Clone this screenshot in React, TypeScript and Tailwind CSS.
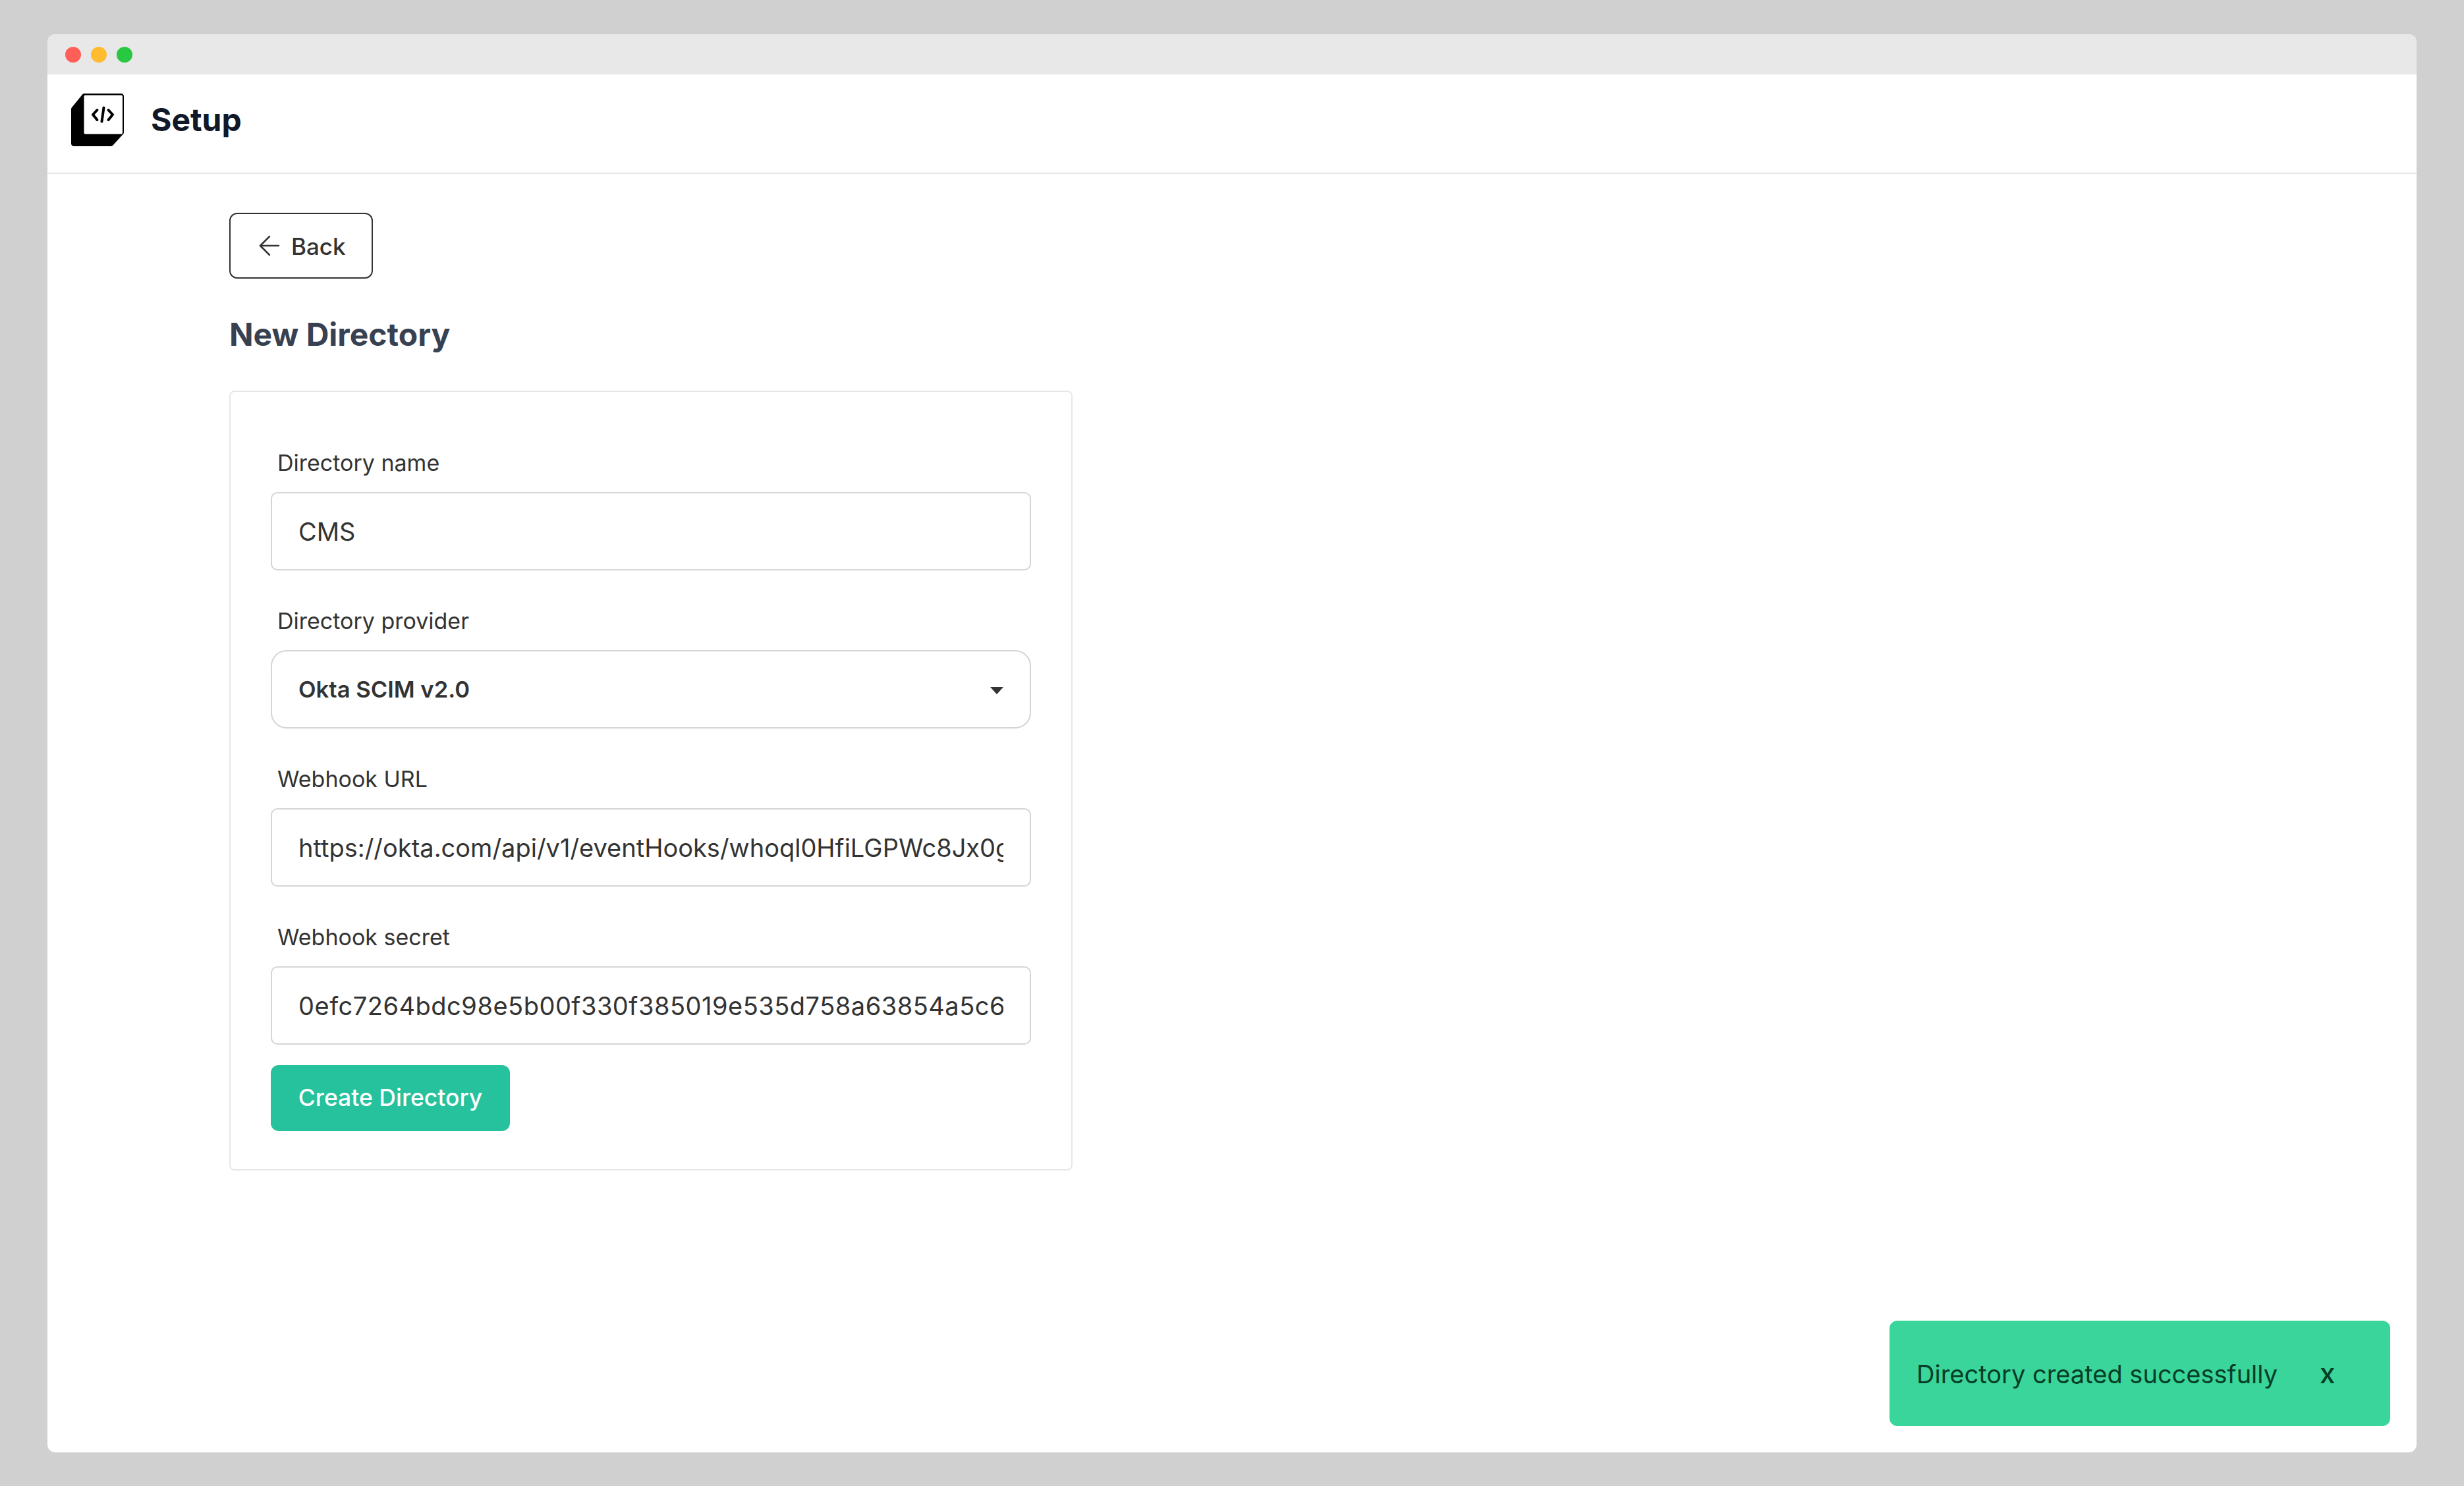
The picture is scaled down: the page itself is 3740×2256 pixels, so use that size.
import { ArrowLeft } from "lucide-react";

const inputClass =
  "h-[119px] w-full rounded-[10px] border-2 border-[#d5d5d5] bg-white px-[40px] text-[38px] text-[#333333] outline-none";

const labelClass = "flex h-[91px] items-center px-[10px] pt-[1px] text-[34px] text-[#333333]";

function Logo() {
  return (
    <svg width="80" height="80" viewBox="0 0 80 80" className="shrink-0">
      <path
        d="M20 0H76C78.2 0 80 1.8 80 4V59C80 60 79.6 60.9 79 61.6L63.5 78.6C62.6 79.5 61.6 80 60.4 80H4C1.8 80 0 78.2 0 76V24C0 22.9 .4 21.9 1.1 21.1L17 1.4C17.8 .5 18.9 0 20 0Z"
        fill="#000000"
      />
      <rect x="19.5" y="2.5" width="58.5" height="59" rx="2" fill="#ffffff" />
      <g stroke="#000000" strokeWidth="4" strokeLinecap="round" strokeLinejoin="round" fill="none">
        <path d="M39.5 25L33 32L39.5 40" />
        <path d="M49.5 21.5L46.5 42.5" />
        <path d="M56.5 25L63 32L56.5 40" />
      </g>
    </svg>
  );
}

function Field({ label, value, inputExtra }: { label: string; value: string; inputExtra?: string }) {
  return (
    <div className="flex flex-col">
      <label className={labelClass}>{label}</label>
      <input readOnly value={value} className={inputExtra ? inputClass + " " + inputExtra : inputClass} />
    </div>
  );
}

export default function App() {
  return (
    <div
      className="flex h-[2256px] w-[3740px] bg-[#d0d0d0] pt-[52px] pr-[72px] pb-[51px] pl-[72px]"
      style={{ fontFamily: "Inter, 'Liberation Sans', sans-serif" }}
    >
      <div className="relative flex flex-1 flex-col overflow-hidden rounded-[12px] bg-white">
        <div className="flex h-[61px] shrink-0 items-center gap-[15px] bg-[#e8e8e8] pl-[27px]">
          <span className="h-[24px] w-[24px] rounded-full bg-[#ff5f57]" />
          <span className="h-[24px] w-[24px] rounded-full bg-[#febc2e]" />
          <span className="h-[24px] w-[24px] rounded-full bg-[#28c840]" />
        </div>

        <header className="flex h-[151px] shrink-0 items-center gap-[41px] border-b-2 border-[#e5e7eb] pb-[11px] pl-[36px]">
          <Logo />
          <h1 className="text-[48px] font-bold text-[#111827]">Setup</h1>
        </header>

        <main className="flex flex-col items-start pt-[59px] pl-[276px]">
          <button className="flex h-[100px] w-[218px] items-center gap-[9px] rounded-[12px] border-2 border-[#333333] pl-[35px] text-[35px] font-medium text-[#333333]">
            <ArrowLeft size={48} strokeWidth={1.25} />
            <span className="pt-[2px]">Back</span>
          </button>

          <h2 className="mt-[50px] text-[48px] leading-[70px] font-bold text-[#374151]">New Directory</h2>

          <form className="mt-[50px] flex w-[1280px] flex-col gap-[30px] rounded-[8px] border-2 border-[#e5e7eb] px-[61px] pt-[61px] pb-[58px]">
            <Field label="Directory name" value="CMS" />
            <div className="flex flex-col">
              <label className={labelClass}>Directory provider</label>
              <div className="flex h-[119px] w-full items-center justify-between rounded-[24px] border-2 border-[#d5d5d5] pr-[40px] pl-[40px] text-[35px] font-semibold text-[#333333]">
                <span className="text-[34.6px]">Okta SCIM v2.0</span>
                <svg width="20" height="11" viewBox="0 0 20 11" className="mt-[4px]">
                  <path d="M0 0H20L10 11Z" fill="#333333" />
                </svg>
              </div>
            </div>
            <Field label="Webhook URL" value="https://okta.com/api/v1/eventHooks/whoql0HfiLGPWc8Jx0g7/lifecycle/verify" />
            <Field
              label="Webhook secret"
              value="0efc7264bdc98e5b00f330f385019e535d758a63854a5c6e1f04bd2a97c3"
              inputExtra="tracking-[0.5px]"
            />
            <button
              type="button"
              className="mt-[1px] h-[100px] w-[363px] rounded-[12px] bg-[#26c29d] text-[35.5px] font-medium text-white"
            >
              Create Directory
            </button>
          </form>
        </main>

        <div className="absolute right-[40px] bottom-[40px] flex h-[160px] w-[760px] items-center rounded-[12px] bg-[#3ad59a] pt-[3px] pl-[41px] text-[38px] text-[#063d27]">
          <span>Directory created successfully</span>
          <span className="mb-[4px] ml-[64px] text-[42px] font-medium">x</span>
        </div>
      </div>
    </div>
  );
}
